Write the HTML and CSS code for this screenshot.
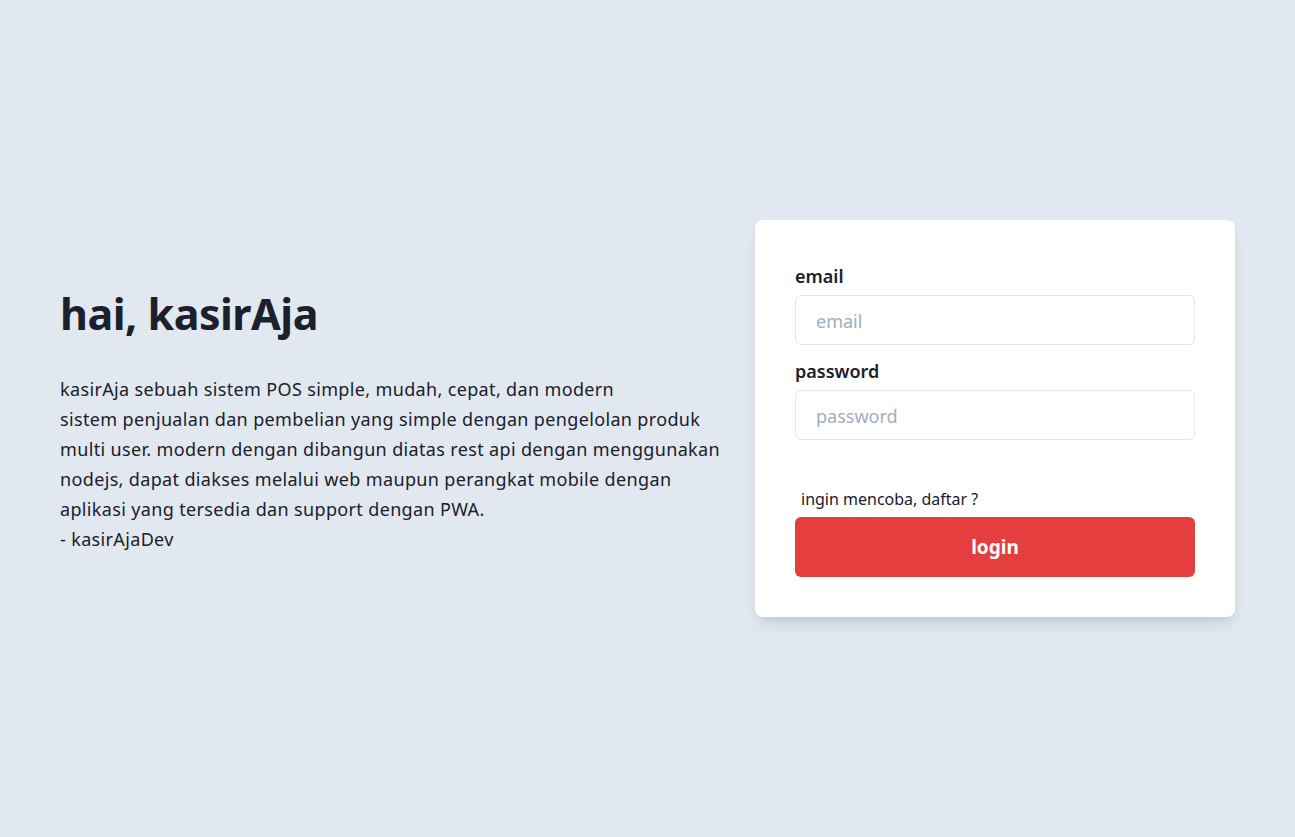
FILE: index.html
```html
<!DOCTYPE html>
<html lang="id">
<head>
<meta charset="utf-8">
<title>kasirAja</title>
<link rel="stylesheet" href="styles.css">
</head>
<body>
<main class="page">
  <section class="intro">
    <h1 class="title">hai, kasirAja</h1>
    <p class="desc">kasirAja sebuah sistem POS simple, mudah, cepat, dan modern<br>sistem penjualan dan pembelian yang simple dengan pengelolan produk<br>multi user. modern dengan dibangun diatas rest api dengan menggunakan<br>nodejs, dapat diakses melalui web maupun perangkat mobile dengan<br>aplikasi yang tersedia dan support dengan PWA.<br>- kasirAjaDev</p>
  </section>
  <form class="card">
    <label class="label" for="email">email</label>
    <input class="input" id="email" type="text" placeholder="email">
    <label class="label label-pw" for="password">password</label>
    <input class="input" id="password" type="password" placeholder="password">
    <a class="signup" href="#">ingin mencoba, daftar ?</a>
    <button class="btn" type="button">login</button>
  </form>
</main>
</body>
</html>
```

FILE: styles.css
```css
* { box-sizing: border-box; }
html, body { margin: 0; padding: 0; }
body {
  background: #e2e8f0;
  color: #1a202c;
  font-family: "Noto Sans", "Open Sans", sans-serif;
}
.page {
  min-height: 837px;
  display: flex;
  align-items: center;
  justify-content: space-between;
  padding: 0 60px;
}
.intro { padding-top: 0; }
.title {
  margin: 0 0 30px;
  font-size: 43px;
  line-height: 60px;
  font-weight: 700;
  letter-spacing: -0.5px;
}
.desc {
  margin: 0;
  font-size: 18px;
  line-height: 30px;
  white-space: nowrap;
  letter-spacing: 0.35px;
}
.card {
  width: 480px;
  background: #fff;
  border-radius: 8px;
  padding: 44px 40px 40px;
  display: flex;
  flex-direction: column;
  box-shadow: 0 10px 15px -3px rgba(0,0,0,0.1), 0 4px 6px -2px rgba(0,0,0,0.05);
}
.label {
  font-size: 18px;
  font-weight: 600;
  line-height: 24px;
  margin-bottom: 7px;
}
.label-pw { margin-top: 14px; }
.input {
  height: 50px;
  border: 1px solid #e2e8f0;
  border-radius: 6px;
  padding: 2px 20px 0;
  font-family: inherit;
  font-size: 18px;
  color: #1a202c;
  outline: none;
}
.input::placeholder { color: #a0aec0; }
.signup {
  margin-top: 47px;
  padding-left: 6px;
  font-size: 16px;
  line-height: 24px;
  color: #1a202c;
  text-decoration: none;
  margin-bottom: 6px;
}
.btn {
  height: 60px;
  border: 0;
  border-radius: 6px;
  background: #e53e3e;
  color: #fff;
  font-family: inherit;
  font-size: 19px;
  font-weight: 700;
}
```
